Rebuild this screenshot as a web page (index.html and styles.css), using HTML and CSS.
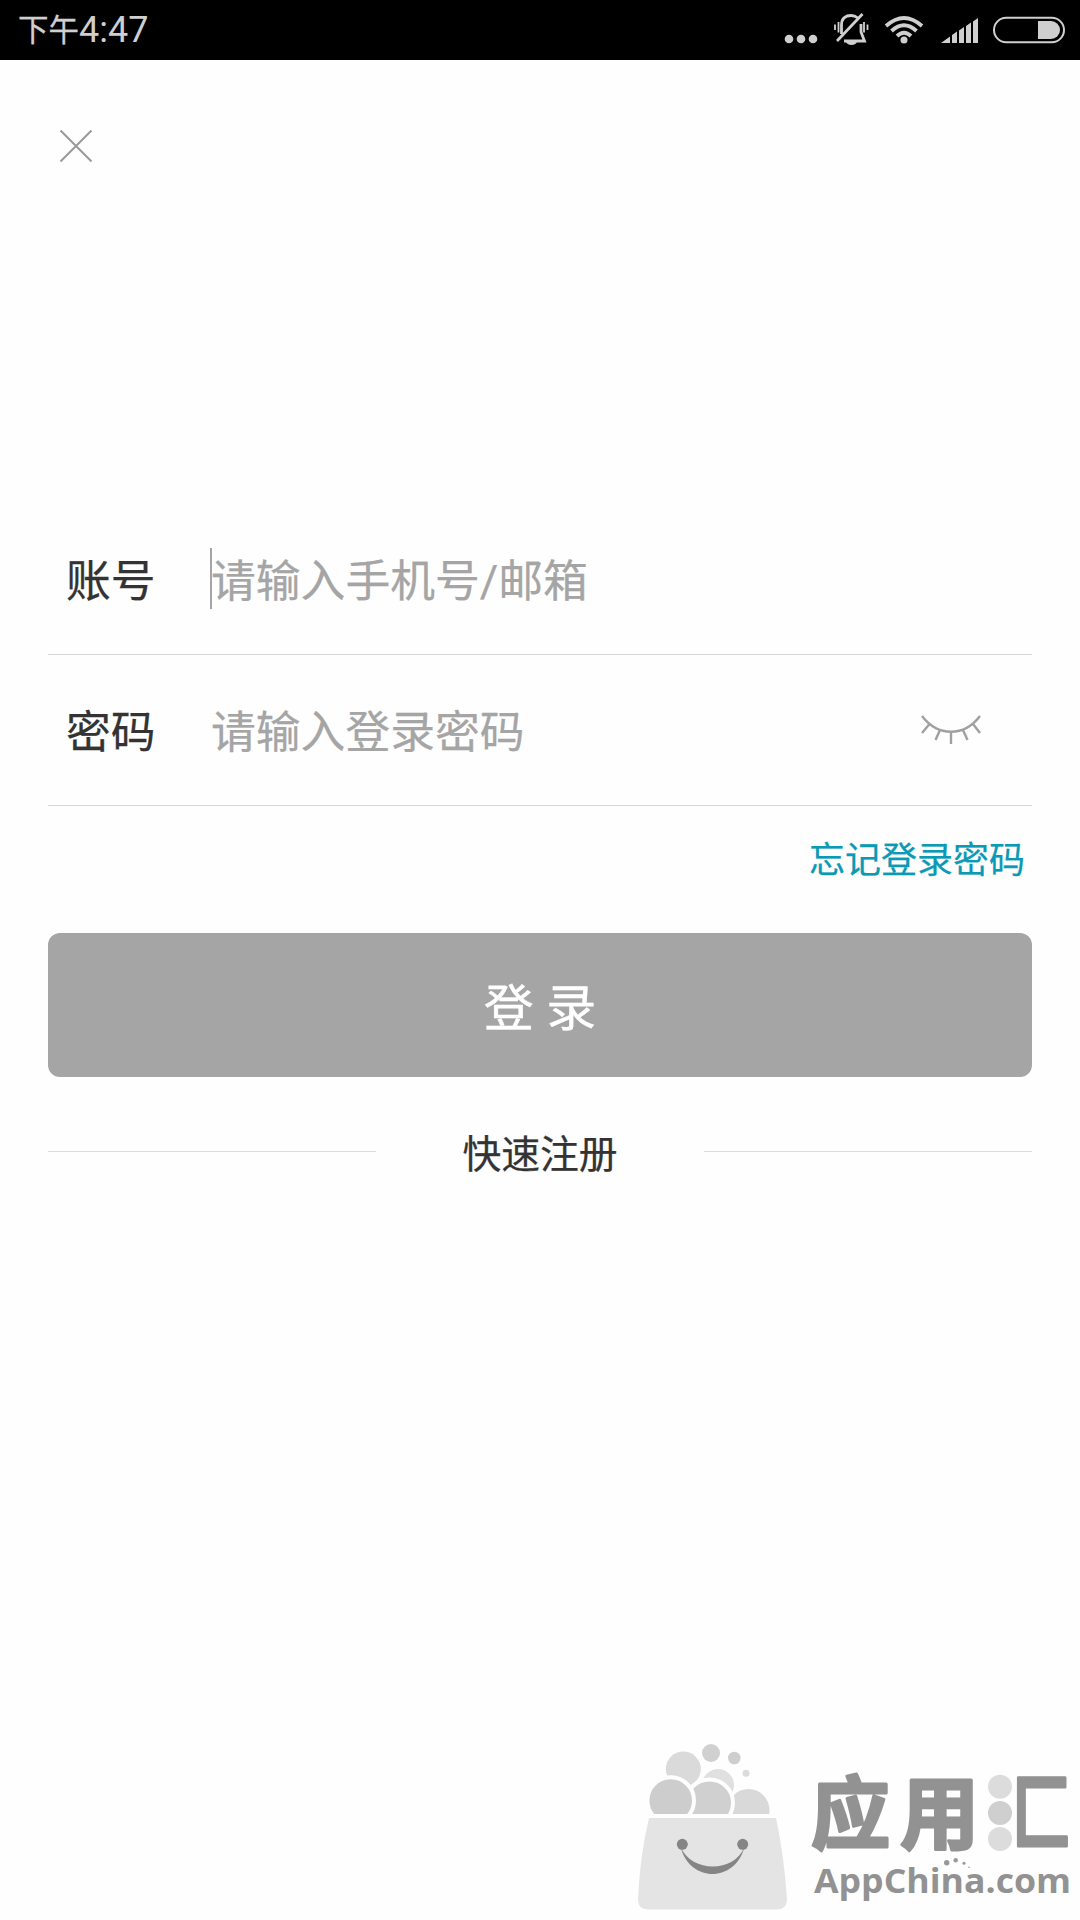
FILE: index.html
```html
<!DOCTYPE html>
<html lang="zh-CN">
<head>
    <meta charset="UTF-8">
    <title>登录</title>
    <link rel="stylesheet" href="styles.css">
</head>
<body>
    <header class="status-bar">
        <div class="time"><span class="period">下午</span>4:47</div>
        <svg class="status-icons" width="300" height="60" viewBox="770 0 300 60">
            <g fill="#cfcfcf">
                <circle cx="789" cy="39" r="4.3"/>
                <circle cx="801" cy="39" r="4.3"/>
                <circle cx="813" cy="39" r="4.3"/>
            </g>
            <!-- muted bell -->
            <g fill="none" stroke="#cfcfcf" stroke-width="2.8">
                <path d="M841.500 34 V25 C841.500 18 846 15.500 851 15.500 C854 15.500 856 16.500 858 18"/>
                <path d="M861 24 V32 L864.500 41 H844"/>
                <path d="M837 41 L862.500 14"/>
                <path d="M835 24.500 V30 M838.500 22 V32.500 M864 22 V32.500 M867.500 24.500 V30" stroke-width="1.8"/>
            </g>
            <path d="M846 42 H857 Q855.500 45 851.500 45 Q847.500 45 846 42 Z" fill="#cfcfcf"/>
            <!-- wifi -->
            <g fill="none" stroke="#cfcfcf" stroke-width="3.800">
                <path d="M886 26 Q904 10 922 26"/>
                <path d="M891.500 31 Q904 19.500 916.500 31"/>
                <path d="M897 36 Q904 29.500 911 36"/>
            </g>
            <circle cx="904" cy="40" r="3.500" fill="#cfcfcf"/>
            <!-- signal -->
            <path d="M941 43 L950 36.500 V43 Z M952 35 L957 31.500 V43 H952 Z M959 30.500 L964 27 V43 H959 Z M966 26 L971 22.500 V43 H966 Z M973 21.500 L978 18 V43 H973 Z" fill="#cfcfcf"/>
            <!-- battery -->
            <rect x="994" y="17.800" width="70" height="24.400" rx="12.200" fill="none" stroke="#cfcfcf" stroke-width="2"/>
            <path d="M1038 21 H1051 A9 9 0 0 1 1051 39 H1038 Z" fill="#cfcfcf"/>
        </svg>
    </header>

    <main class="login">
        <button class="close" type="button" aria-label="关闭">
            <svg width="34" height="34" viewBox="0 0 34 34">
                <path d="M1.500 1.500 L32.500 32.500 M32.500 1.500 L1.500 32.500" fill="none" stroke="#999" stroke-width="2"/>
            </svg>
        </button>

        <div class="field">
            <span class="label">账号</span>
            <span class="caret"></span>
            <span class="placeholder">请输入手机号/邮箱</span>
        </div>
        <div class="field">
            <span class="label">密码</span>
            <span class="caret hidden"></span>
            <span class="placeholder">请输入登录密码</span>
            <svg class="eye" width="62" height="32" viewBox="0 0 62 32">
                <path d="M2 2 C18 23 44 23 60 2 M9.500 10 L2 19 M20 16 L15.500 26 M31 18 V30 M43 16 L47.500 26 M53 10 L60 19" fill="none" stroke="#a0a0a0" stroke-width="2.400"/>
            </svg>
        </div>

        <a class="forgot">忘记登录密码</a>
        <button class="submit" type="button">登 录</button>

        <div class="register">
            <span class="line"></span>
            <a>快速注册</a>
            <span class="line"></span>
        </div>
    </main>

    <svg class="watermark" width="450" height="190" viewBox="630 1730 450 190">
        <defs>
            <clipPath id="bagTop"><rect x="630" y="1730" width="180" height="84"/></clipPath>
        </defs>
        <!-- bubbles in the bag -->
        <g clip-path="url(#bagTop)">
            <circle cx="683.300" cy="1769" r="17.500" fill="#dadada"/>
            <circle cx="711" cy="1753" r="9" fill="#d0d0d0"/>
            <circle cx="734.300" cy="1758" r="6.300" fill="#cecece"/>
            <circle cx="746" cy="1773.300" r="3.500" fill="#dcdcdc"/>
            <circle cx="718" cy="1785" r="16" fill="#e0e0e0"/>
            <circle cx="748.500" cy="1810" r="21" fill="#d9d9d9"/>
            <circle cx="709.500" cy="1803" r="23.500" fill="#d0d0d0" stroke="#fefefe" stroke-width="4"/>
            <circle cx="670.700" cy="1800.500" r="23.300" fill="#cdcdcd" stroke="#fefefe" stroke-width="4"/>
        </g>
        <path d="M649 1818 H776 Q784 1855 787 1899 Q787 1909.500 777 1909.500 H648 Q638 1909.500 638 1899 Q640 1855 649 1818 Z" fill="#e4e4e4"/>
        <g fill="#858585">
            <circle cx="682.300" cy="1844.300" r="5.500"/>
            <circle cx="742.700" cy="1844.300" r="5.500"/>
            <path d="M680.500 1847 C690 1883 735 1883 744.500 1847 C734 1873 692 1873 680.500 1847 Z"/>
        </g>
        <!-- brand name -->
        <text class="brand" x="811" y="1843" textLength="168">应用</text>
        <g fill="#dcdcdc">
            <circle cx="1000" cy="1786.700" r="12"/>
            <circle cx="1000" cy="1813" r="12" fill="#cfcfcf"/>
            <circle cx="1000" cy="1839" r="12"/>
        </g>
        <text class="brand" transform="translate(1012 1843) scale(.75 1.05)">匚</text>
        <text class="site" x="814" y="1892.500" textLength="257" lengthAdjust="spacingAndGlyphs">AppChina.com</text>
        <g fill="#999">
            <circle cx="946.700" cy="1862.700" r="2.700"/>
            <circle cx="955.700" cy="1860.300" r="2.200"/>
            <circle cx="964" cy="1863.300" r="1.500"/>
            <circle cx="969" cy="1867.300" r=".8"/>
        </g>
    </svg>
</body>
</html>
```
FILE: styles.css
```css
* {
    box-sizing: border-box;
}

body {
    margin: 0;
    height: 1920px;
    background: #fefefe;
    color: #333;
    font-family: Roboto, "Noto Sans CJK SC", sans-serif;
    -webkit-text-stroke: .25px;
    position: relative;
    overflow: hidden;
}

button {
    border: none;
    background: none;
    padding: 0;
    font-family: inherit;
    -webkit-text-stroke: .4px;
}

svg {
    display: block;
    -webkit-text-stroke: 0;
}

.status-bar {
    display: flex;
    justify-content: space-between;
    height: 60px;
    padding: 0 10px 0 18px;
    background: #000;
    color: #cfcfcf;
}

.time {
    font-size: 36px;
    line-height: 61px;
    -webkit-text-stroke: 0;
}

.period {
    font-size: 30.500px;
    vertical-align: 1px;
    -webkit-text-stroke: .3px;
}

.login {
    display: flex;
    flex-direction: column;
    padding: 0 48px;
}

.close {
    width: 34px;
    height: 34px;
    margin: 69px 0 341px 11px;
}

.field {
    display: flex;
    align-items: center;
    height: 151px;
    padding: 0 50px 1px 18px;
    border-bottom: 1px solid #d6d6d6;
    font-size: 44.800px;
}

.label {
    width: 144px;
}

.caret {
    width: 2px;
    height: 61px;
    margin-right: -1px;
    background: #a5a5a5;
}

.hidden {
    visibility: hidden;
}

.label,
.placeholder {
    padding-bottom: 2px;
}

.placeholder {
    color: #a5a5a5;
}

.eye {
    margin-left: auto;
}

.forgot {
    align-self: flex-end;
    margin: 28px 7px 0 0;
    font-size: 36px;
    line-height: 54px;
    color: #0a9ab5;
}

.submit {
    height: 144px;
    margin-top: 45px;
    padding-bottom: 2px;
    border-radius: 12px;
    background: #a5a5a5;
    color: #fff;
    font-size: 50px;
}

.register {
    display: grid;
    grid-template-columns: 1fr 1fr 1fr;
    align-items: center;
    height: 60px;
    margin-top: 44px;
    font-size: 38.800px;
    text-align: center;
}

.line {
    height: 1px;
    background: #dcdcdc;
}

.watermark {
    position: absolute;
    right: 0;
    bottom: 0;
}

.brand {
    font-family: "Noto Sans CJK SC", sans-serif;
    font-size: 79px;
    font-weight: 700;
    fill: #929292;
    stroke: #929292;
    stroke-width: 3;
    stroke-linejoin: round;
    -webkit-text-stroke: 3px #929292;
}

.site {
    font-family: "Open Sans", sans-serif;
    font-size: 34px;
    font-weight: 700;
    fill: #929292;
}
```
